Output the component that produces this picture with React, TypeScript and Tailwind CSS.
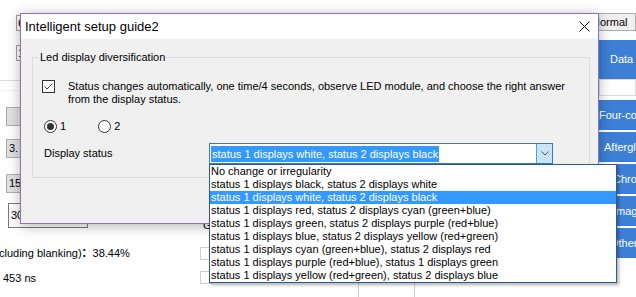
import React from "react";

const options = [
    "No change or irregularity",
    "status 1 displays black, status 2 displays white",
    "status 1 displays white, status 2 displays black",
    "status 1 displays red, status 2 displays cyan (green+blue)",
    "status 1 displays green, status 2 displays purple (red+blue)",
    "status 1 displays blue, status 2 displays yellow (red+green)",
    "status 1 displays cyan (green+blue), status 2 displays red",
    "status 1 displays purple (red+blue), status 1 displays green",
    "status 1 displays yellow (red+green), status 2 displays blue",
];

const selected = 2;

function Background() {
    return (
        <div className="flex h-full">
            {/* left column of the host window */}
            <div className="flex w-[140px] flex-col">
                <div className="ml-[16px] mt-[15px] h-[16px] w-[30px] border border-[#a0a0a0] bg-white pl-[1px] leading-[14px]">6</div>
                <div className="ml-[16px] mt-[14px] h-[16px] w-[30px] border border-[#a0a0a0] bg-white pl-[1px] leading-[14px]">1</div>
                <div className="mt-[19px] h-px w-full bg-[#dadada]" />
                <div className="mt-[9px] h-px w-full bg-[#efefef]" />
                <div className="ml-[6px] mt-[16px] h-[19px] w-[40px] border border-[#adadad] bg-[#e1e1e1]" />
                <div className="ml-[6px] mt-[13px] h-[19px] w-[40px] border border-[#adadad] bg-[#e1e1e1] pl-[2px] leading-[17px]">3.</div>
                <div className="ml-[6px] mt-[16px] h-[19px] w-[40px] border border-[#adadad] bg-[#e1e1e1] pl-[2px] leading-[17px]">15</div>
                <div className="ml-[8px] mt-[10px] h-[25px] w-[80px] border border-[#7a7a7a] bg-white pl-[2px] leading-[23px]">30</div>
                <div className="-ml-[1px] mt-[18px] whitespace-nowrap leading-[13px]">
                    cluding blanking)<span className="font-['Noto_Sans_CJK_SC',sans-serif] font-bold">：</span>38.44%
                </div>
                <div className="ml-[3px] mt-[12px] leading-[13px]">453 ns</div>
            </div>

            {/* middle bits peeking out below the dialog */}
            <div className="ml-[60px] flex w-[40px] flex-col">
                <div className="ml-[3px] mt-[219px] leading-[13px]">G</div>
                <div className="mt-[15px] h-[13px] w-[13px] border border-[#d0d0d0] bg-white" />
                <div className="mt-[11px] h-[13px] w-[13px] border border-[#d0d0d0] bg-white" />
            </div>
            <div className="ml-[118px] w-[57px]">
                <div className="mt-[282px] h-[20px] w-[57px] border border-[#d0d0d0]" />
            </div>

            {/* right tool column, runs past the window edge */}
            <div className="ml-auto flex w-[47px] flex-col overflow-hidden">
                <div className="mt-[13px] h-[18px] whitespace-nowrap border border-[#adadad] bg-[#f0f0f0] pl-[2px] leading-[16px]">Normal</div>
                <div className="ml-[10px] flex flex-col overflow-hidden text-white">
                    <div className="mt-[9px] flex h-[39px] items-center bg-[#3d7fd7] pl-[11px]">Data</div>
                    <div className="h-[17px] border border-[#dadada] bg-white" />
                    <div className="mt-[4px] flex flex-col gap-[2px] whitespace-nowrap">
                        <div className="flex h-[30px] items-center bg-[#3d7fd7] pl-0">Four-color</div>
                        <div className="flex h-[30px] items-center bg-[#3d7fd7] pl-[5px]">Afterglow</div>
                        <div className="flex h-[30px] items-center bg-[#3d7fd7] pl-[14px]">Chroma</div>
                        <div className="flex h-[30px] items-center bg-[#3d7fd7] pl-[14px]">Image</div>
                        <div className="flex h-[30px] items-center bg-[#3d7fd7] pl-[11px]">Other</div>
                    </div>
                </div>
            </div>
        </div>
    );
}

function Dialog() {
    return (
        <div className="absolute left-[20px] top-[13px] flex h-[211px] w-[579px] flex-col border border-[#8b74b4] bg-[#f0f0f0] shadow-[0_2px_12px_rgba(0,0,0,0.3)]">
            {/* title bar */}
            <div className="flex h-[25px] items-center justify-between bg-white pl-[4px] pr-[8px]">
                <span className="text-[13px]">Intelligent setup guide2</span>
                <svg width="11" height="11" viewBox="0 0 11 11">
                    <path d="M0.5 0.5 L10.5 10.5 M10.5 0.5 L0.5 10.5" stroke="#111" strokeWidth="1" />
                </svg>
            </div>

            <div className="flex-1 pl-[11px] pr-[8px] pt-[18px]">
                {/* group box */}
                <div className="relative h-[121px] border border-[#dcdcdc] pl-[9px] pt-[22px]">
                    <span className="absolute -top-[7px] left-[6px] bg-[#f0f0f0] px-[1px] leading-[13px]">
                        Led display diversification
                    </span>

                    <div className="flex items-start">
                        <div className="flex h-[13px] w-[13px] shrink-0 items-center justify-center border border-[#333] bg-white">
                            <svg width="11" height="11" viewBox="0 0 11 11">
                                <path d="M1.5 5.5 L4 8 L9.5 2.5" fill="none" stroke="#444" strokeWidth="1" />
                            </svg>
                        </div>
                        <p className="ml-[13px] leading-[13px]">
                            Status changes automatically, one time/4 seconds, observe LED module, and choose the right answer
                            <br />
                            from the display status.
                        </p>
                    </div>

                    <div className="mt-[14px] flex h-[13px] items-center">
                        <div className="ml-[2px] flex h-[13px] w-[13px] items-center justify-center rounded-full border border-[#333] bg-white">
                            <div className="h-[7px] w-[7px] rounded-full bg-[#333]" />
                        </div>
                        <span className="ml-[3px]">1</span>
                        <div className="ml-[32px] h-[13px] w-[13px] rounded-full border border-[#333] bg-white" />
                        <span className="ml-[3px]">2</span>
                    </div>

                    <div className="mt-[10px] flex h-[21px] items-center">
                        <span className="ml-[2px] w-[165px]">Display status</span>
                        <div className="flex h-[21px] w-[344px] border border-[#3d7ab8] bg-white">
                            <div className="flex flex-1 items-center pl-[1px]">
                                <span className="bg-[#3399ff] px-[1px] leading-[16px] text-white">{options[selected]}</span>
                            </div>
                            <div className="flex w-[16px] items-center justify-center border-l border-[#569de5] bg-[#cce4f7]">
                                <svg width="8" height="5" viewBox="0 0 8 5">
                                    <path d="M0.5 0.5 L4 4 L7.5 0.5" fill="none" stroke="#555" strokeWidth="1" />
                                </svg>
                            </div>
                        </div>
                    </div>
                </div>
            </div>
        </div>
    );
}

function OptionList() {
    return (
        <div className="absolute left-[209px] top-[164px] w-[408px] border border-[#2f5b8c] bg-white shadow-[2px_2px_3px_rgba(0,0,0,0.3)]">
            {options.map((o, i) => (
                <div
                    key={o}
                    className={
                        i === selected
                            ? "h-[13px] whitespace-nowrap bg-[#3399ff] pl-[1px] leading-[13px] text-white"
                            : "h-[13px] whitespace-nowrap pl-[1px] leading-[13px]"
                    }
                >
                    {o}
                </div>
            ))}
        </div>
    );
}

export default function App() {
    return (
        <div className="relative h-[297px] w-[636px] overflow-hidden bg-white font-['Liberation_Sans',Arial,sans-serif] text-[11px] text-black">
            <Background />
            <Dialog />
            <OptionList />
        </div>
    );
}
